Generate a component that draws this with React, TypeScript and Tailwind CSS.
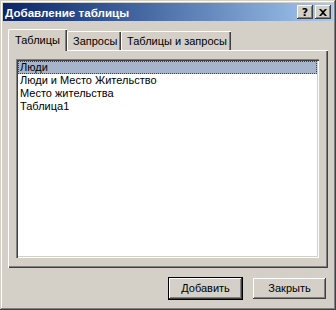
import React from 'react';

const raised = 'shadow-[inset_-1px_-1px_#404040,inset_1px_1px_#ffffff,inset_-2px_-2px_#808080]';

function TitleButton({ children }: { children: React.ReactNode }) {
  return (
    <div className={`w-[16px] h-[14px] bg-[#d4d0c8] flex items-center justify-center ${raised}`}>
      {children}
    </div>
  );
}

function Tab({ label, active, width }: { label: string; active?: boolean; width: string }) {
  if (active) {
    return (
      <div
        className={`${width} h-[22px] -mb-[1px] relative z-10 bg-[#d4d0c8] border-l border-t border-white rounded-tl-[2px] shadow-[inset_-1px_0_#404040,inset_-2px_0_#808080] flex items-start whitespace-nowrap pl-[6px] pt-[4px]`}
      >
        {label}
      </div>
    );
  }
  return (
    <div
      className={`${width} h-[19px] bg-[#d4d0c8] border-l border-t border-white rounded-tl-[2px] shadow-[inset_-1px_0_#404040,inset_-2px_0_#808080] flex items-start whitespace-nowrap pl-[5px] pt-[3px]`}
    >
      {label}
    </div>
  );
}

function Button({ label, isDefault }: { label: string; isDefault?: boolean }) {
  return (
    <div className={`w-[75px] h-[23px] ${isDefault ? 'border border-black' : 'p-[1px]'}`}>
      <div className={`w-full h-full bg-[#d4d0c8] flex items-center justify-center ${raised}`}>
        {label}
      </div>
    </div>
  );
}

const tables = ['Люди', 'Люди и Место Жительство', 'Место жительства', 'Таблица1'];

export default function App() {
  return (
    <div
      className="w-[336px] h-[310px] bg-[#d4d0c8] p-[3px] flex flex-col text-[11px] leading-[13px] text-black font-['Liberation_Sans',Arial,sans-serif] shadow-[inset_-1px_-1px_#404040,inset_1px_1px_#d4d0c8,inset_-2px_-2px_#808080,inset_2px_2px_#ffffff]"
    >
      {/* Title bar */}
      <div className="h-[18px] bg-gradient-to-r from-[#0a246a] to-[#a6caf0] flex items-center pl-[2px] pr-[2px]">
        <span className="text-white font-bold text-[11.6px] flex-1">Добавление таблицы</span>
        <div className="flex">
          <TitleButton>
            <span className="font-bold text-[11px] leading-none font-['DejaVu_Sans',sans-serif]">?</span>
          </TitleButton>
          <div className="w-[2px]" />
          <TitleButton>
            <svg width="8" height="7" viewBox="0 0 8 7">
              <path d="M0 0h2l2 2 2-2h2L5 3.5 8 7H6L4 5 2 7H0l3-3.5z" fill="#000" />
            </svg>
          </TitleButton>
        </div>
      </div>

      {/* Tabs */}
      <div className="mx-[5px] mt-[8px] flex flex-col">
        <div className="flex items-end h-[21px]">
          <Tab label="Таблицы" active width="w-[59px]" />
          <Tab label="Запросы" width="w-[54px]" />
          <Tab label="Таблицы и запросы" width="w-[110px]" />
        </div>
        <div className="h-[218px] bg-[#d4d0c8] shadow-[inset_1px_1px_#ffffff,inset_-1px_-1px_#404040,inset_-2px_-2px_#808080] pt-[9px] pl-[8px] pr-[9px] pb-[10px] flex">
          <div className="flex-1 bg-white p-[2px] shadow-[inset_1px_1px_#808080,inset_2px_2px_#404040,inset_-1px_-1px_#ffffff,inset_-2px_-2px_#d4d0c8]">
            {tables.map((t, i) => (
              <div
                key={t}
                className={`h-[13px] pl-[2px] whitespace-nowrap ${
                  i === 0 ? 'bg-[#a6b4cc] outline-1 outline-dotted outline-[#404040] -outline-offset-1' : ''
                }`}
              >
                {t}
              </div>
            ))}
          </div>
        </div>
      </div>

      {/* Buttons */}
      <div className="flex justify-end gap-[9px] mt-[9px] mr-[6px]">
        <Button label="Добавить" isDefault />
        <Button label="Закрыть" />
      </div>
    </div>
  );
}
